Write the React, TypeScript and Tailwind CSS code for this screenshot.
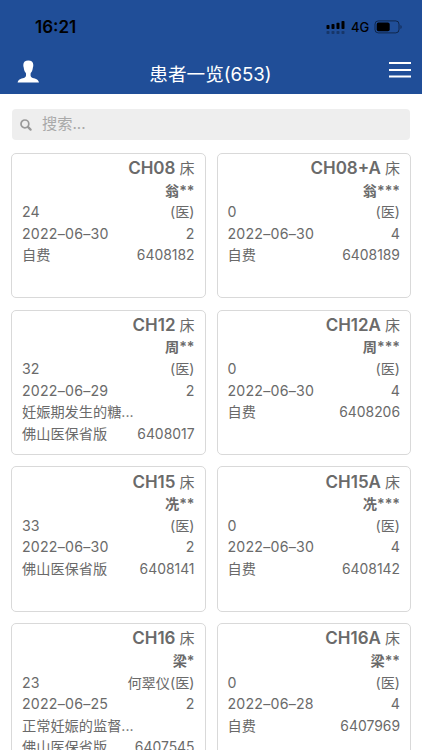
type Patient = {
  bed: string;
  name: string;
  age: number;
  doctor?: string;
  date: string;
  level: number;
  diagnosis?: string;
  insurance: string;
  id: string;
};

const patients: Patient[] = [
  { bed: "CH08", name: "翁**", age: 24, date: "2022–06–30", level: 2, insurance: "自费", id: "6408182" },
  { bed: "CH08+A", name: "翁***", age: 0, date: "2022–06–30", level: 4, insurance: "自费", id: "6408189" },
  { bed: "CH12", name: "周**", age: 32, date: "2022–06–29", level: 2, diagnosis: "妊娠期发生的糖...", insurance: "佛山医保省版", id: "6408017" },
  { bed: "CH12A", name: "周***", age: 0, date: "2022–06–30", level: 4, insurance: "自费", id: "6408206" },
  { bed: "CH15", name: "冼**", age: 33, date: "2022–06–30", level: 2, insurance: "佛山医保省版", id: "6408141" },
  { bed: "CH15A", name: "冼***", age: 0, date: "2022–06–30", level: 4, insurance: "自费", id: "6408142" },
  { bed: "CH16", name: "梁*", age: 23, doctor: "何翠仪", date: "2022–06–25", level: 2, diagnosis: "正常妊娠的监督...", insurance: "佛山医保省版", id: "6407545" },
  { bed: "CH16A", name: "梁**", age: 0, date: "2022–06–28", level: 4, insurance: "自费", id: "6407969" },
];

function StatusBar() {
  return (
    <div className="flex h-[54px] items-center justify-between pl-[35px] pr-[20px] text-black">
      <span className="text-[17px] font-semibold leading-none">16:21</span>
      <div className="flex items-center">
        <svg width="20" height="15" viewBox="0 0 20 15">
          <rect x="0.5" y="5" width="3" height="4" rx="0.8" />
          <rect x="5.5" y="4" width="3" height="5" rx="0.8" />
          <rect x="10.5" y="2.7" width="3" height="6.3" rx="0.8" />
          <rect x="15.5" y="1" width="3" height="8" rx="0.8" />
          <g opacity="0.3">
            <rect x="0.5" y="11" width="3" height="3" rx="0.8" />
            <rect x="5.5" y="11" width="3" height="3" rx="0.8" />
            <rect x="10.5" y="11" width="3" height="3" rx="0.8" />
            <rect x="15.5" y="11" width="3" height="3" rx="0.8" />
          </g>
        </svg>
        <span className="ml-[5px] w-[19px] text-[13px] font-medium leading-none">4G</span>
        <svg className="ml-[4px]" width="28" height="14" viewBox="0 0 28 14">
          <rect x="1" y="0.9" width="24" height="12" rx="3.3" fill="none" stroke="#000" strokeOpacity="0.5" />
          <rect x="2.7" y="2.6" width="13" height="8.6" rx="1.8" />
          <path d="M26.5 5v4c1.5-.6 1.5-3.4 0-4z" opacity="0.5" />
        </svg>
      </div>
    </div>
  );
}

function Header() {
  return (
    <header className="h-[94px] bg-[#204e98]">
      <StatusBar />
      <div className="flex h-10 items-center justify-between pl-[17px] pr-[11px] text-white">
        <svg className="-mt-[5px]" width="23" height="23" viewBox="0 0 23 23" fill="currentColor">
          <path d="M11.3 0.5C8.3 .5 6.3 2 6.3 4.9c0 1 .2 1.8.4 2.6C7 9.9 7.6 11.8 8.9 13c.3 2.1.3 3.8-1.1 4.5C5.4 18.7 1.3 18.6.6 22.5h21.4c-.7-3.900-4.8-3.800-7.200-5-1.400-.7-1.400-2.400-1.100-4.500 1.300-1.200 1.900-3.100 2.200-5.500.2-.8.4-1.600.4-2.600C16.300 2 14.300.5 11.300.5z" />
        </svg>
        <h1 className="mr-[8px] mt-px text-[18.6px] leading-none">患者一览(653)</h1>
        <svg className="-mt-[9px]" width="22" height="16" viewBox="0 0 22 16" fill="currentColor">
          <rect y="0" width="22" height="2" />
          <rect y="7" width="22" height="2" />
          <rect y="13.5" width="22" height="2" />
        </svg>
      </div>
    </header>
  );
}

function SearchBox() {
  return (
    <div className="mx-[12px] mt-[15px] flex h-[31px] items-center rounded-[4px] bg-[#eee] pl-[8px] text-[#a9a9a9]">
      <svg width="12" height="12" viewBox="0 0 12 12" fill="none" stroke="#999">
        <circle cx="4.9" cy="4.9" r="3.9" strokeWidth="1.7" />
        <path d="M7.9 7.9l2.7 2.7" strokeWidth="2.2" strokeLinecap="round" />
      </svg>
      <span className="-mt-px ml-[10px] text-[15.2px] leading-none">搜索...</span>
    </div>
  );
}

function PatientCard({ patient }: { patient: Patient }) {
  return (
    <div className="h-[145.6px] rounded-[5px] border border-[#d9d9d9] px-[10px] pt-[4.2px] text-[14.2px] leading-[21.6px] text-[#6a6a6a]">
      <div className="flex h-[21.6px] items-baseline justify-end gap-[4px]">
        <span className="text-[17px] font-semibold">{patient.bed}</span>
        <span className="text-[15px]">床</span>
      </div>
      <div className="h-[21.6px] text-right font-semibold">{patient.name}</div>
      <div className="flex h-[21.6px] justify-between">
        <span>{patient.age}</span>
        <span>{patient.doctor}(医)</span>
      </div>
      <div className="flex h-[21.6px] justify-between">
        <span className="tracking-[0.2px]">{patient.date}</span>
        <span>{patient.level}</span>
      </div>
      {patient.diagnosis && <div className="h-[21.6px]">{patient.diagnosis}</div>}
      <div className="flex items-baseline justify-between">
        <span>{patient.insurance}</span>
        <span className="text-[13.9px]">{patient.id}</span>
      </div>
    </div>
  );
}

export default function App() {
  return (
    <div className="h-[750px] w-[422px] overflow-hidden bg-white font-['Inter','Noto_Sans_CJK_SC',sans-serif]">
      <Header />
      <SearchBox />
      <div className="mt-[12.8px] grid grid-cols-2 gap-x-[11px] gap-y-[11.2px] px-[11px]">
        {patients.map((patient) => (
          <PatientCard key={patient.bed} patient={patient} />
        ))}
      </div>
    </div>
  );
}
